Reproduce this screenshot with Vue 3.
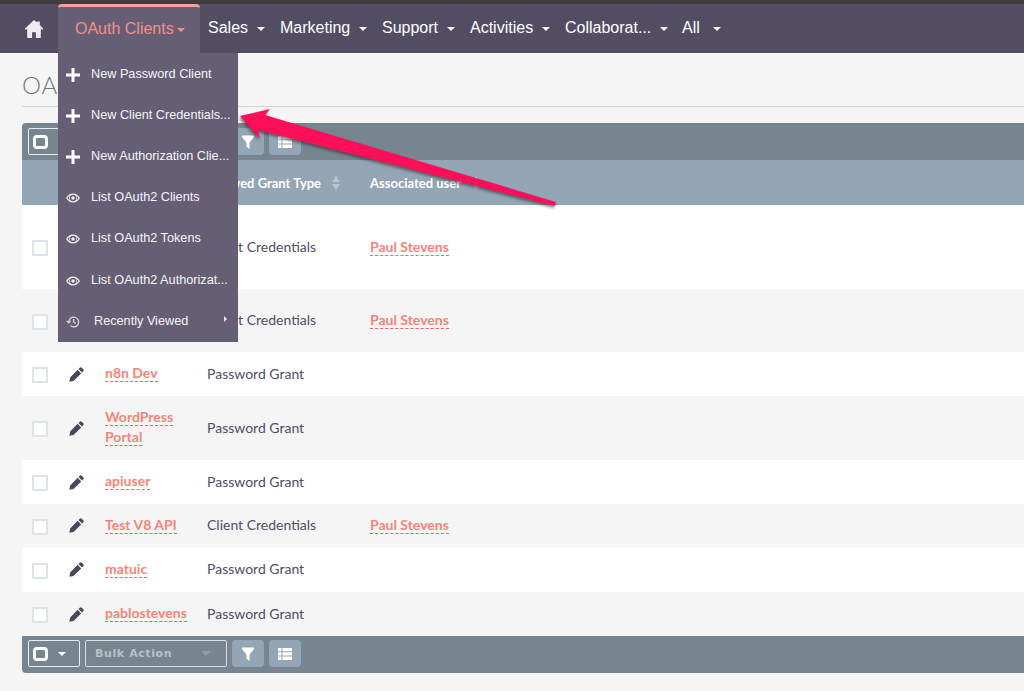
<script setup>
const navItems = [
  { label: 'Sales', cls: 'w-sales' },
  { label: 'Marketing', cls: 'w-marketing' },
  { label: 'Support', cls: 'w-support' },
  { label: 'Activities', cls: 'w-activities' },
  { label: 'Collaborat...', cls: 'w-collab' },
  { label: 'All', cls: 'w-all' },
]
const menu = [
  { icon: 'plus', label: 'New Password Client' },
  { icon: 'plus', label: 'New Client Credentials...' },
  { icon: 'plus', label: 'New Authorization Clie...' },
  { icon: 'eye', label: 'List OAuth2 Clients' },
  { icon: 'eye', label: 'List OAuth2 Tokens' },
  { icon: 'eye', label: 'List OAuth2 Authorizat...' },
]
const rows = [
  { h: 84, name: '', grant: 'Client Credentials', user: 'Paul Stevens' },
  { h: 63, name: '', grant: 'Client Credentials', user: 'Paul Stevens' },
  { h: 44, name: 'n8n Dev', grant: 'Password Grant', user: '' },
  { h: 64, name: 'WordPress Portal', grant: 'Password Grant', user: '' },
  { h: 44, name: 'apiuser', grant: 'Password Grant', user: '' },
  { h: 43, name: 'Test V8 API', grant: 'Client Credentials', user: 'Paul Stevens' },
  { h: 45, name: 'matuic', grant: 'Password Grant', user: '' },
  { h: 44, name: 'pablostevens', grant: 'Password Grant', user: '' },
]
</script>

<template>
  <div class="page">
    <header class="nav">
      <a class="home" aria-label="Home">
        <svg width="20" height="20" viewBox="0 0 20 20"><path fill="#eeecf0" d="M10 1 0.800 9.800l1 1.100L3.200 9.600V19h4.900v-5.800h3.800V19h4.900V9.600l1.400 1.300 1-1.100L15.800 6V2.500h-2.600v1z"/></svg>
      </a>
      <div class="tab-active">
        <span>OAuth Clients</span><i class="caret caret-active"></i>
        <ul class="dropdown">
          <li v-for="m in menu" :key="m.label" class="dd-item">
            <span class="dd-icon">
              <svg v-if="m.icon === 'plus'" width="14" height="14" viewBox="0 0 14 14"><path fill="#fff" d="M5.500 0h3v5.500H14v3H8.500V14h-3V8.500H0v-3h5.500z"/></svg>
              <svg v-else width="14" height="10" viewBox="0 0 14 10"><path fill="#f0eff2" d="M7 .5C4 .5 1.500 2.500 0 5c1.500 2.500 4 4.500 7 4.500S12.500 7.500 14 5C12.500 2.500 10 .5 7 .5zm0 1.300A3.200 3.200 0 1 1 7 8.200 3.200 3.200 0 0 1 7 1.800zM1.500 5c.6-.9 1.300-1.600 2.200-2.200A4.200 4.200 0 0 0 3.700 7.200 7 7 0 0 1 1.500 5zm8.800-2.200c.9.600 1.600 1.300 2.200 2.200a7 7 0 0 1-2.200 2.200 4.200 4.200 0 0 0 0-4.400zM7 3.300A1.700 1.700 0 1 0 7 6.700 1.700 1.700 0 0 0 7 3.300z"/></svg>
            </span>
            <span>{{ m.label }}</span>
          </li>
          <li class="dd-item dd-recent">
            <span class="dd-icon">
              <svg width="15" height="14" viewBox="0 0 15 14" fill="none" stroke="#e0dde4" stroke-width="1.300"><path d="M3 7a5.300 5.300 0 1 1 1.700 3.900"/><path d="M8.200 3.800V7.300l2.300 1.400"/><path d="M.8 5.800 3 8l2-2.200" stroke-width="1.100"/></svg>
            </span>
            <span>Recently Viewed</span>
            <i class="sub-caret"></i>
          </li>
        </ul>
      </div>
      <a v-for="n in navItems" :key="n.label" class="tab" :class="n.cls">
        <span>{{ n.label }}</span><i class="caret"></i>
      </a>
    </header>

    <main class="content">
      <h1 class="title">OA</h1>
      <div class="toolbar">
        <div class="sel-box">
          <span class="sel-square"></span><i class="caret"></i>
        </div>
        <div class="bulk"><span>Bulk Action</span><i class="bulk-caret"></i></div>
        <button class="tool-btn">
          <svg width="12" height="14" viewBox="0 0 12 14"><path fill="#fff" d="M0 .5h12v1.500L7.500 7.500V14L4.500 11.500V7.500L0 2z"/></svg>
        </button>
        <button class="tool-btn">
          <svg width="14" height="12" viewBox="0 0 14 12"><path fill="#fff" d="M0 0h3.500v3.300H0zM4.500 0H14v3.300H4.500zM0 4.300h3.500v3.300H0zM4.500 4.300H14v3.300H4.500zM0 8.600h3.500V12H0zM4.500 8.600H14V12H4.500z"/></svg>
        </button>
      </div>
      <div class="thead">
        <span class="th th-grant">Allowed Grant Type<i class="sort"></i></span>
        <span class="th th-user">Associated user<i class="sort"></i></span>
      </div>
      <div
        v-for="(r, i) in rows"
        :key="i"
        class="row"
        :class="{ alt: i % 2 === 1 }"
        :style="{ height: r.h + 'px' }"
      >
        <span class="check"></span>
        <svg class="pencil" width="15" height="15" viewBox="0 0 16 16"><path fill="#4b465a" d="M11.400.8a1.600 1.600 0 0 1 2.200 0l1.600 1.600a1.600 1.600 0 0 1 0 2.200l-1.300 1.300-3.800-3.800zM9.200 3 13 6.800 4.800 15 .4 15.800l.8-4.600z"/></svg>
        <span class="name"><a v-if="r.name">{{ r.name }}</a></span>
        <span class="grant">{{ r.grant }}</span>
        <span class="user"><a v-if="r.user">{{ r.user }}</a></span>
      </div>
      <div class="toolbar toolbar-bottom">
        <div class="sel-box">
          <span class="sel-square"></span><i class="caret"></i>
        </div>
        <div class="bulk"><span>Bulk Action</span><i class="bulk-caret"></i></div>
        <button class="tool-btn">
          <svg width="12" height="14" viewBox="0 0 12 14"><path fill="#fff" d="M0 .5h12v1.500L7.500 7.500V14L4.500 11.500V7.500L0 2z"/></svg>
        </button>
        <button class="tool-btn">
          <svg width="14" height="12" viewBox="0 0 14 12"><path fill="#fff" d="M0 0h3.500v3.300H0zM4.500 0H14v3.300H4.500zM0 4.300h3.500v3.300H0zM4.500 4.300H14v3.300H4.500zM0 8.600h3.500V12H0zM4.500 8.600H14V12H4.500z"/></svg>
        </button>
      </div>
    </main>

    <svg class="arrow" width="1024" height="691" viewBox="0 0 1024 691">
      <polygon class="arrow-shape" points="240,116 270,109 265,115 556,202 555,206 258,130 260,139" fill="#ff0f5a"/>
    </svg>
  </div>
</template>

<style>
html, body { margin: 0; background: #f5f5f5; }
</style>

<style scoped>
.page {
  position: relative;
  width: 1024px;
  height: 691px;
  overflow: hidden;
  background: #f5f5f5;
  font-family: "Liberation Sans", Arial, sans-serif;
}
.nav {
  display: flex;
  align-items: stretch;
  height: 49px;
  border-top: 4px solid #3e3c3f;
  background: #534d64;
  color: #fff;
  font-size: 16px;
}
.home {
  display: flex;
  align-items: center;
  justify-content: center;
  width: 58px;
  padding-left: 9px;
  box-sizing: border-box;
}
.tab-active {
  position: relative;
  display: flex;
  align-items: center;
  width: 142px;
  box-sizing: border-box;
  padding: 0 0 3px 17px;
  background: #655e75;
  border-top: 3px solid #f5a196;
  border-radius: 4px 4px 0 0;
  color: #f58f85;
}
.tab {
  display: flex;
  align-items: center;
  box-sizing: border-box;
  padding-bottom: 1px;
  white-space: nowrap;
}
.w-sales { width: 80px; padding-left: 8px; }
.w-marketing { width: 102px; }
.w-support { width: 88px; }
.w-activities { width: 95px; }
.w-collab { width: 117px; }
.caret {
  display: inline-block;
  width: 0;
  height: 0;
  margin-left: 9px;
  margin-top: 2px;
  border-left: 4.500px solid transparent;
  border-right: 4.500px solid transparent;
  border-top: 4px solid #fff;
}
.w-all .caret { margin-left: 13px; }
.caret-active {
  margin-left: 3px;
  border-top-color: #f58f85;
}
.dropdown {
  position: absolute;
  left: 0;
  top: 46px;
  width: 180px;
  height: 289px;
  margin: 0;
  padding: 0;
  list-style: none;
  background: #655e75;
  color: #f6f5f8;
  font-size: 12.700px;
  z-index: 5;
}
.dd-item {
  display: flex;
  align-items: center;
  height: 41.200px;
  padding-left: 8px;
  white-space: nowrap;
}
.dd-icon {
  display: flex;
  justify-content: center;
  width: 14px;
  margin-right: 11px;
  padding-top: 2px;
}
.dd-recent { position: relative; }
.dd-recent span:nth-child(2) { margin-left: 3px; }
.sub-caret {
  position: absolute;
  left: 166px;
  top: 16px;
  width: 0;
  height: 0;
  border-top: 3px solid transparent;
  border-bottom: 3px solid transparent;
  border-left: 3px solid #e8e6ec;
}
.content {
  padding: 0 0 0 22px;
}
.title {
  margin: 0;
  height: 54px;
  box-sizing: border-box;
  padding-top: 19px;
  border-bottom: 1px solid #d5d7dc;
  font-family: Lato, sans-serif;
  font-weight: 300;
  font-size: 24px;
  line-height: 26px;
  letter-spacing: 1px;
  color: #6f7680;
}
.toolbar {
  display: flex;
  align-items: center;
  gap: 5px;
  height: 37px;
  margin-top: 16px;
  padding-left: 6px;
  box-sizing: border-box;
  background: #778591;
  border-radius: 4px 0 0 0;
}
.toolbar-bottom {
  margin-top: 0;
  padding-bottom: 2px;
  border-radius: 0 0 0 4px;
}
.sel-box {
  display: flex;
  align-items: center;
  width: 52px;
  height: 27px;
  box-sizing: border-box;
  padding-left: 4px;
  border: 1px solid #e8ecef;
  border-radius: 2px;
}
.sel-box .caret { margin-left: 10px; margin-top: 1px; }
.sel-square {
  width: 15px;
  height: 14px;
  box-sizing: border-box;
  background: #778591;
  border: 3px solid #fff;
  border-radius: 4px;
}
.bulk {
  display: flex;
  align-items: center;
  justify-content: space-between;
  width: 142px;
  height: 27px;
  box-sizing: border-box;
  padding: 0 15px 0 9px;
  border: 1px solid #d8dde1;
  border-radius: 2px;
  color: #b9c1c8;
  font-family: "DejaVu Sans", sans-serif;
  font-weight: 700;
  font-size: 11px;
  letter-spacing: .6px;
}
.bulk-caret {
  width: 0;
  height: 0;
  border-left: 5px solid transparent;
  border-right: 5px solid transparent;
  border-top: 5px solid #929da7;
}
.tool-btn {
  display: flex;
  align-items: center;
  justify-content: center;
  width: 32px;
  height: 27px;
  padding: 0;
  border: 0;
  border-radius: 4px;
  background: #94a6b5;
}
.thead {
  position: relative;
  height: 45px;
  background: #94a6b5;
  color: #fff;
  font-family: Lato, sans-serif;
  font-weight: 700;
  font-size: 13px;
}
.th {
  position: absolute;
  top: 15px;
  display: flex;
  align-items: center;
  white-space: nowrap;
}
.th-grant { left: 185px; }
.th-user { left: 348px; }
.sort {
  position: relative;
  display: inline-block;
  width: 8px;
  height: 14px;
  margin-left: 11px;
}
.sort::before,
.sort::after {
  content: "";
  position: absolute;
  left: 0;
  border-left: 4px solid transparent;
  border-right: 4px solid transparent;
}
.sort::before { top: 0; border-bottom: 6px solid #b8c4ce; }
.sort::after { bottom: 0; border-top: 6px solid #b8c4ce; }
.row {
  display: flex;
  align-items: center;
  box-sizing: border-box;
  padding-bottom: 2px;
  background: #fff;
  font-family: Lato, sans-serif;
  font-size: 14px;
  color: #4f4e66;
}
.row.alt { background: #f5f5f5; }
.check {
  width: 16px;
  height: 16px;
  box-sizing: border-box;
  margin: 4px 0 0 10px;
  background: #fff;
  border: 2px solid #dfe4ea;
  flex: none;
}
.pencil {
  margin: 2px 0 0 21px;
  flex: none;
}
.name {
  width: 102px;
  margin-left: 21px;
  flex: none;
  box-sizing: border-box;
  font-weight: 700;
  color: #f5857a;
  line-height: 20px;
}
.name a, .user a {
  border-bottom: 1px dashed #f0655f;
}
.grant {
  width: 163px;
  flex: none;
}
.user {
  font-weight: 700;
  color: #f5857a;
}
.arrow {
  position: absolute;
  left: 0;
  top: 0;
  z-index: 10;
  pointer-events: none;
}
.arrow-shape {
  filter: drop-shadow(-1px 2px 1.500px rgba(40, 40, 40, .6));
}
</style>
